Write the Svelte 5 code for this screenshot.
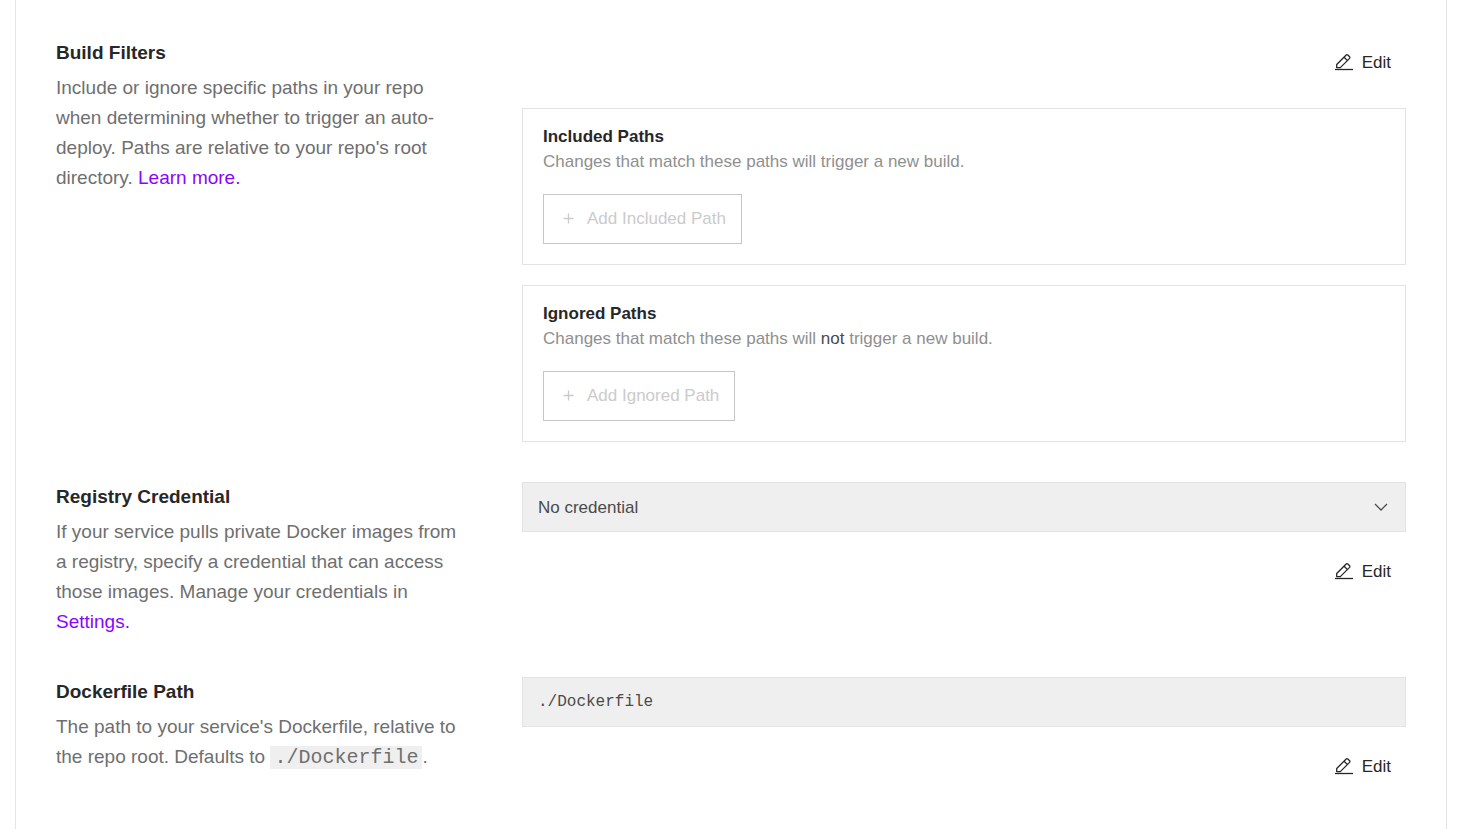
<script>
  let credential = $state('none');
  let dockerfilePath = $state('./Dockerfile');
</script>

{#snippet editButton(label)}
  <button class="edit" type="button" aria-label={label}>
    <svg width="20" height="20" viewBox="0 0 20 20" fill="none" stroke="currentColor" stroke-width="1.3" aria-hidden="true">
      <path d="M2.7 14.6 V11.5 L12.2 2 Q13 1.2 13.8 2 L15.6 3.8 Q16.3 4.6 15.6 5.4 L6.3 14.6 Z M10.1 4.3 L13.2 7.4" stroke-linejoin="round" />
      <path d="M1 16.5 H19" />
    </svg>
    <span>Edit</span>
  </button>
{/snippet}

{#snippet plusIcon()}
  <svg width="12" height="12" viewBox="0 0 12 12" fill="none" stroke="currentColor" stroke-width="1.3" aria-hidden="true">
    <path d="M5.5 0.5 V10.5 M0.5 5.5 H10.5" />
  </svg>
{/snippet}

<main>
  <section class="setting">
    <div class="about">
      <h2>Build Filters</h2>
      <p>
        Include or ignore specific paths in your repo when determining whether to trigger an auto-deploy. Paths are
        relative to your repo's root directory. <a href="#build-filters">Learn more.</a>
      </p>
    </div>
    <div class="filters">
      {@render editButton('Edit build filters')}
      <div class="panel">
        <h3>Included Paths</h3>
        <p>Changes that match these paths will trigger a new build.</p>
        <button class="add" type="button" disabled>{@render plusIcon()}<span>Add Included Path</span></button>
      </div>
      <div class="panel">
        <h3>Ignored Paths</h3>
        <p>Changes that match these paths will <em>not</em> trigger a new build.</p>
        <button class="add" type="button" disabled>{@render plusIcon()}<span>Add Ignored Path</span></button>
      </div>
    </div>
  </section>

  <section class="setting">
    <div class="about">
      <h2><label for="credential">Registry Credential</label></h2>
      <p>
        If your service pulls private Docker images from a registry, specify a credential that can access those images.
        Manage your credentials in <a href="#settings">Settings.</a>
      </p>
    </div>
    <div class="control">
      <div class="select">
        <select id="credential" class="field" bind:value={credential} disabled>
          <option value="none">No credential</option>
        </select>
        <svg class="chevron" width="14" height="8" viewBox="0 0 14 8" fill="none" stroke="currentColor" stroke-width="1.3" aria-hidden="true">
          <path d="M1 1 L7 7 L13 1" />
        </svg>
      </div>
      {@render editButton('Edit registry credential')}
    </div>
  </section>

  <section class="setting">
    <div class="about">
      <h2><label for="dockerfile">Dockerfile Path</label></h2>
      <p>
        The path to your service's Dockerfile, relative to the repo root. Defaults to <code>./Dockerfile</code>.
      </p>
    </div>
    <div class="control">
      <input id="dockerfile" class="field mono" type="text" bind:value={dockerfilePath} disabled />
      {@render editButton('Edit Dockerfile path')}
    </div>
  </section>
</main>

<style>
  :global(body) {
    background: #fff;
  }

  main {
    box-sizing: border-box;
    display: flex;
    flex-direction: column;
    gap: 40px;
    min-height: 100vh;
    margin: 0 10px 0 15px;
    padding: 38px 40px 37px;
    border: solid #e3e3e3;
    border-width: 0 1px;
    color: #272727;
    font-family: 'Liberation Sans', Arial, sans-serif;
    font-size: 17px;
  }

  .setting {
    display: grid;
    grid-template-columns: minmax(0, 410fr) minmax(0, 884fr);
    gap: 56px;
  }

  h2,
  h3,
  p {
    margin: 0;
  }

  h2 {
    font-size: 19px;
    line-height: 30px;
  }

  .about p {
    margin-top: 5px;
    color: #6f6f6f;
    font-size: 19px;
    line-height: 30px;
  }

  a {
    color: #8a05ff;
    text-decoration: none;
  }

  code {
    padding: 0 4px;
    background: #efefef;
    font-family: 'Liberation Mono', monospace;
    font-size: 20px;
    line-height: 24px;
  }

  .filters,
  .control {
    display: flex;
    flex-direction: column;
    gap: 20px;
  }

  .control {
    gap: 15px;
  }

  .panel {
    padding: 15px 20px 20px;
    border: 1px solid #e3e3e3;
  }

  h3 {
    font-size: 17px;
    line-height: 25px;
  }

  .panel p {
    margin-bottom: 20px;
    color: #8f8f8f;
    line-height: 25px;
  }

  em {
    color: #4a4a4a;
    font-style: normal;
  }

  button {
    display: flex;
    align-items: center;
    box-sizing: border-box;
    height: 50px;
    background: none;
    font: inherit;
  }

  .edit {
    align-self: flex-end;
    gap: 8px;
    padding: 0 15px;
    border: 0;
    color: #272727;
    cursor: pointer;
  }

  .add {
    gap: 12px;
    padding: 0 15px 0 19px;
    border: 1px solid #c6c6c6;
    color: #cbcbcb;
  }

  .field {
    box-sizing: border-box;
    width: 100%;
    height: 50px;
    margin: 0;
    padding: 0 15px;
    appearance: none;
    border: 1px solid #e3e3e3;
    border-radius: 0;
    background: #efefef;
    color: #4a4a4a;
    font: inherit;
    opacity: 1;
  }

  .field.mono {
    font-family: 'Liberation Mono', monospace;
    font-size: 16px;
  }

  .select {
    display: grid;
    align-items: center;
  }

  .select > * {
    grid-area: 1 / 1;
  }

  .chevron {
    justify-self: end;
    margin-right: 18px;
    color: #4a4a4a;
    pointer-events: none;
  }
</style>
